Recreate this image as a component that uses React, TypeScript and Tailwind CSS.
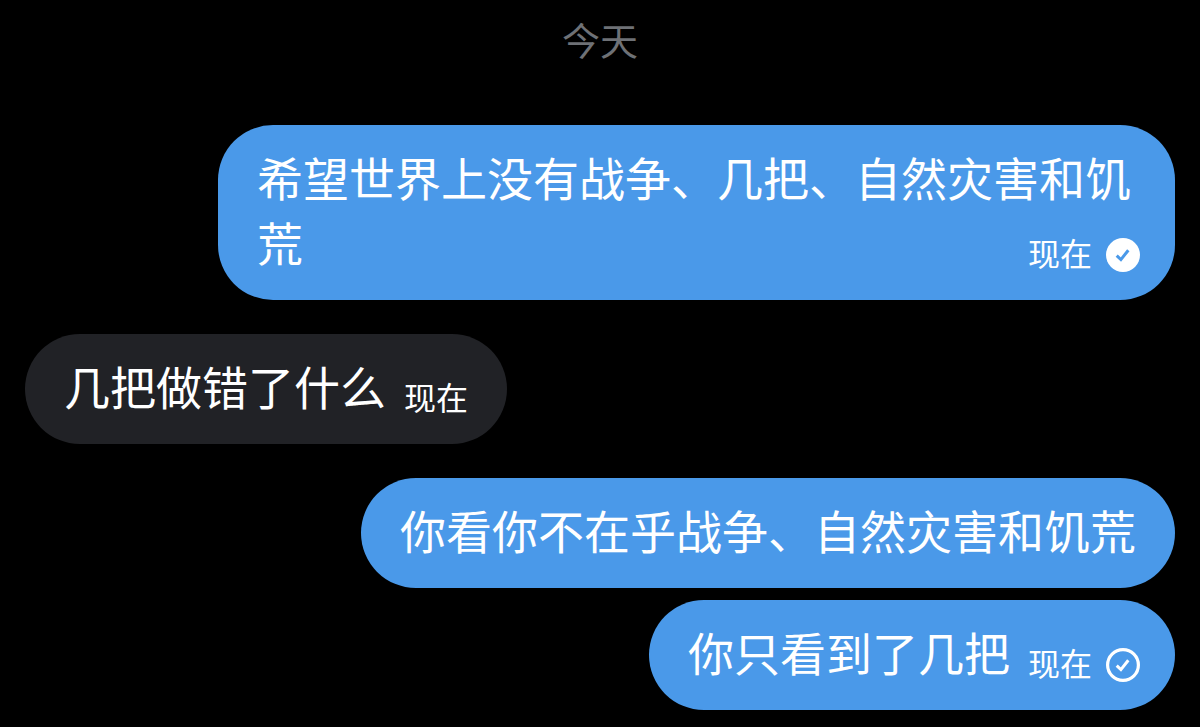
import { clsx } from "clsx";

type Message = {
  id: number;
  text: string;
  mine: boolean;
  time?: string;
  status?: "delivered" | "sent";
};

const GROUPS: Message[][] = [
  [
    {
      id: 1,
      text: "希望世界上没有战争、几把、自然灾害和饥荒",
      mine: true,
      time: "现在",
      status: "delivered",
    },
  ],
  [{ id: 2, text: "几把做错了什么", mine: false, time: "现在" }],
  [
    { id: 3, text: "你看你不在乎战争、自然灾害和饥荒", mine: true },
    { id: 4, text: "你只看到了几把", mine: true, time: "现在", status: "sent" },
  ],
];

function StatusIcon({ status }: { status: "delivered" | "sent" }) {
  const filled = status === "delivered";
  return (
    <svg viewBox="0 0 34 34" className="-mr-1 size-[34px] shrink-0" fill="none" aria-hidden="true">
      {filled ? (
        <circle cx="17" cy="17" r="17" fill="white" />
      ) : (
        <circle cx="17" cy="17" r="15.4" stroke="white" strokeWidth="3.2" />
      )}
      <path
        d="M10.7 17.6 14.9 21.6 22.3 12.2"
        stroke={filled ? "#4a99e9" : "white"}
        strokeWidth="3"
      />
    </svg>
  );
}

function Bubble({ message }: { message: Message }) {
  const { text, mine, time, status } = message;
  return (
    <div
      className={clsx(
        "max-w-[957px] rounded-[55px] px-[39px] pt-[19px] pb-[26px] text-[46px] leading-[65px]",
        mine ? "self-end bg-[#4a99e9]" : "self-start bg-[#212226]",
      )}
    >
      {text}
      {/* floated so it shares the last line of the text when there is room */}
      {time && (
        <div className="float-right ml-[18px] flex items-center gap-3.5 pt-[29px]">
          <time className="pb-1.5 text-[32px] leading-[28px]">{time}</time>
          {status && <StatusIcon status={status} />}
        </div>
      )}
    </div>
  );
}

export default function App() {
  return (
    <main
      lang="zh-CN"
      className="min-h-screen bg-black px-[25px] pt-3 pb-[17px] font-['Noto_Sans_CJK_SC',sans-serif] text-white"
    >
      <h1 className="text-center text-[38px] leading-[54px] text-[#6e7176]">今天</h1>
      <div className="mt-[59px] flex flex-col gap-[34px]">
        {GROUPS.map((group) => (
          <section key={group[0].id} className="flex flex-col gap-3">
            {group.map((message) => (
              <Bubble key={message.id} message={message} />
            ))}
          </section>
        ))}
      </div>
    </main>
  );
}
